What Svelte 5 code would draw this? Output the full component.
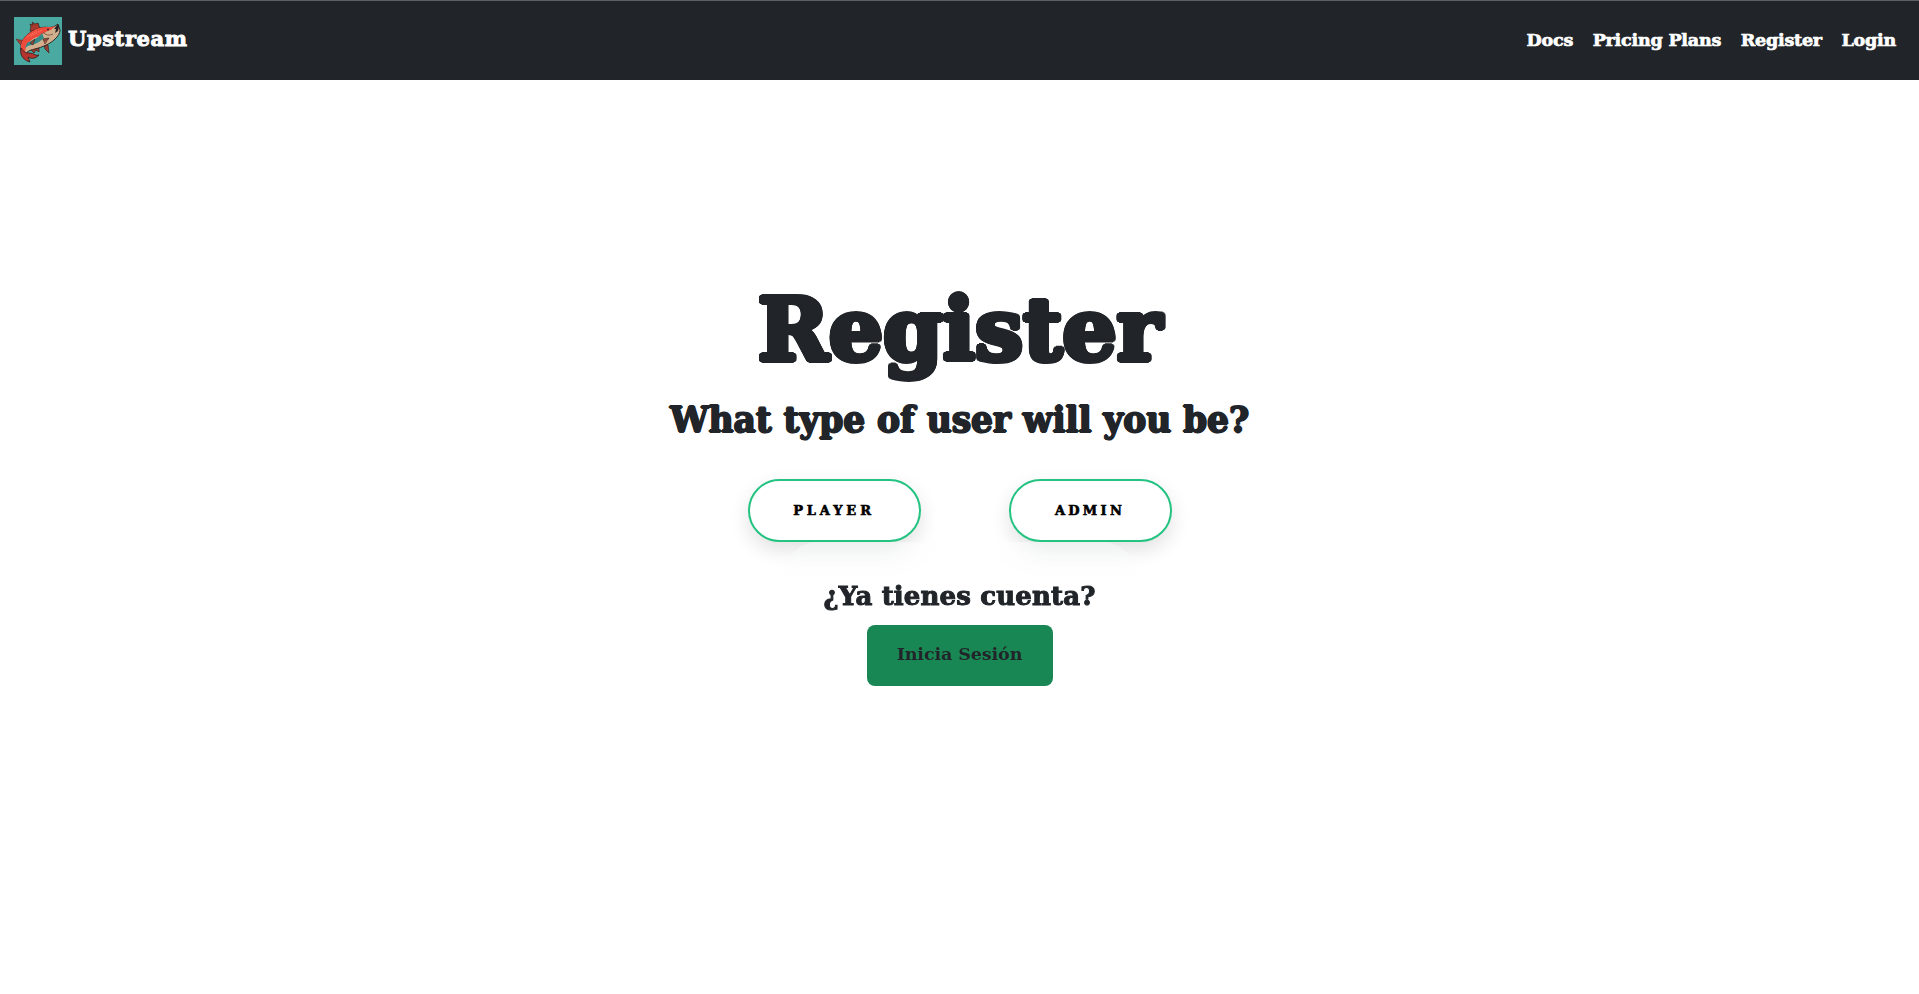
<script>
  const links = ['Docs', 'Pricing Plans', 'Register', 'Login'];
</script>

<header>
  <a class="brand" href="#home">
    <svg width="48" height="48" viewBox="0 0 48 48" aria-hidden="true">
      <rect width="48" height="48" fill="#4aaaa2" />
      <path d="M16 14 17 10 16 7 19 8 18 5 21 7 24 6 26 12 21 15Z" fill="#a8392c" stroke="#3b1c1d" stroke-width=".7" />
      <path d="M30 27 34 28 35 36 31 32ZM19 31 25 31 25 35 22 33 20 36 17 33Z" fill="#98402f" stroke="#3b1c1d" stroke-width=".7" />
      <path d="M8 29 5 26 2 22 6 23 8 23 11 26Z" fill="#a8412f" stroke="#542326" stroke-width=".5" />
      <path d="M7 31C6 22 16 14 25 11C32 9 36 12 41 9L44 7L46 13C46 19 38 26 30 29C21 33 14 32 12 37C9 37 7 35 7 31Z" fill="#d1b08e" stroke="#27191c" stroke-width=".9" />
      <path d="M7 31C6 22 16 14 25 11C32 9 36 11 41 9L37 13C31 14 29 18 23 20C17 22 12 27 11 35C8 34 7 33 7 31Z" fill="#ee4a3b" />
      <path d="M13 26C19 23 23 22 28 16L30 21 25 25C20 28 16 27 11 31Z" fill="#328b88" />
      <path d="M16 26 21 22 19 28ZM29 22 35 21 31 27Z" fill="#8e4a37" stroke="#302326" stroke-width=".6" />
      <path d="M29 15Q33 20 39 17" fill="none" stroke="#83604c" stroke-width="1" />
      <path d="M7 31C5 39 11 44 16 45L14 40C17 42 22 42 25 38C20 39 21 36 15 36C11 36 9 34 7 31Z" fill="#b5342d" stroke="#2d1b20" stroke-width=".8" />
      <path d="M40 12 44 7 45 10 44 14 41 16 42 12Z" fill="#292126" />
      <circle cx="34" cy="12.5" r="1" fill="#242226" />
      <path d="M13 20 23 14M17 19 28 13M26 28 35 23" fill="none" stroke="#ff9a7c" stroke-width=".8" stroke-dasharray="1 1" />
    </svg>
    <span>Upstream</span>
  </a>
  <nav>
    {#each links as label}
      <a href="#{label}">{label}</a>
    {/each}
  </nav>
</header>

<main>
  <h1>Register</h1>
  <h2>What type of user will you be?</h2>
  <div class="choices">
    <button class="player">Player</button>
    <button class="admin">Admin</button>
  </div>
  <section>
    <h3>¿Ya tienes cuenta?</h3>
    <a class="login" href="#login">Inicia Sesión</a>
  </section>
</main>

<style>
  :global(body) {
    margin: 0;
    background: #fff;
    color: #212529;
    font-family: "DejaVu Serif", serif;
    font-weight: 700;
  }
  a { color: inherit; text-decoration: none; white-space: nowrap; }
  header {
    box-sizing: border-box;
    height: 80px;
    padding: 1px 23px 0 14px;
    border-top: 1px solid #5e6163;
    background: #212529;
    color: #fff;
    display: flex;
    align-items: center;
    justify-content: space-between;
  }
  .brand { display: flex; align-items: center; gap: 6px; font-size: 21px; line-height: 30px; letter-spacing: .6px; -webkit-text-stroke: .9px #fff; }
  .brand span { margin-top: -4px; }
  .brand svg { display: block; }
  nav { display: flex; gap: 19.5px; font-size: 17.5px; line-height: 24px; letter-spacing: -.2px; margin-top: -3px; -webkit-text-stroke: .7px #fff; }
  main { display: flex; flex-direction: column; align-items: center; padding-top: 200px; }
  h1, h2, h3 { margin: 0; font-weight: 700; white-space: nowrap; }
  h1 {
    font-size: 86px;
    line-height: 100px;
    letter-spacing: -.4px;
    text-shadow:
      2.6px 0, -2.6px 0, 0 2.6px, 0 -2.6px,
      1.8px 1.8px, -1.8px 1.8px, 1.8px -1.8px, -1.8px -1.8px,
      2.4px 1px, 2.4px -1px, -2.4px 1px, -2.4px -1px,
      1px 2.4px, 1px -2.4px, -1px 2.4px, -1px -2.4px;
  }
  h2 {
    font-size: 34.5px;
    line-height: 44px;
    margin-top: 18px;
    letter-spacing: -.1px;
    text-shadow: 1px 0, -1px 0, 0 1px, 0 -1px;
  }
  .choices { display: flex; gap: 88px; margin-top: 37px; }
  button {
    box-sizing: border-box;
    height: 63px;
    padding: 0;
    border: 2px solid #24c381;
    border-radius: 32px;
    background: #fff;
    color: #000;
    font: 700 13px "DejaVu Serif", serif;
    text-transform: uppercase;
    -webkit-text-stroke: .6px #000;
    box-shadow: 0 8px 20px rgba(0, 0, 0, .12);
  }
  .player { width: 173px; letter-spacing: 3.9px; }
  .admin { width: 163px; letter-spacing: 3.3px; }
  section {
    box-sizing: border-box;
    width: 350px;
    padding-top: 37px;
    border-radius: 32px;
    background: rgba(255, 255, 255, .35);
    backdrop-filter: blur(10px);
    display: flex;
    flex-direction: column;
    align-items: center;
  }
  h3 { font-size: 26px; line-height: 35px; margin-bottom: 1px; letter-spacing: .15px; -webkit-text-stroke: 1px #212529; }
  .login {
    box-sizing: border-box;
    width: 186px;
    height: 61px;
    margin-top: 10px;
    padding-bottom: 3px;
    border-radius: 8px;
    background: #198754;
    display: flex;
    align-items: center;
    justify-content: center;
    font-size: 17.5px;
    letter-spacing: -.1px;
  }
</style>
